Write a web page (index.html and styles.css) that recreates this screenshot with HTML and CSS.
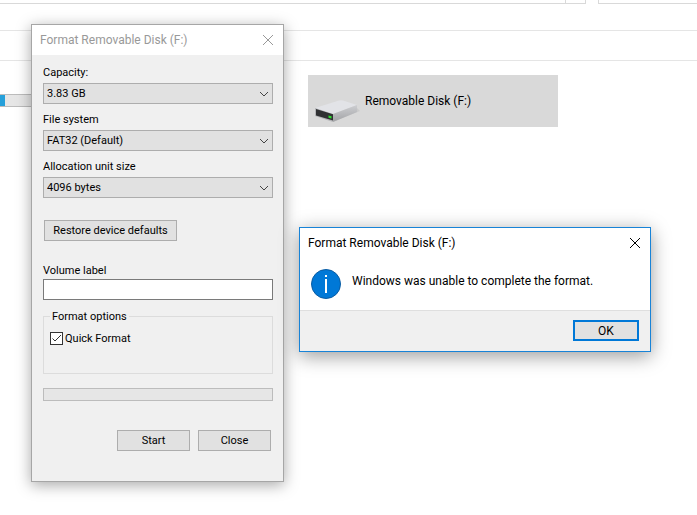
FILE: index.html
```
<!DOCTYPE html>
<html lang="en">
<head>
  <meta charset="UTF-8">
  <title>Format Removable Disk (F:)</title>
  <link rel="stylesheet" href="styles.css">
</head>
<body>
  <!-- Explorer window behind the dialogs -->
  <div class="explorer">
    <div class="address-row">
      <div class="address-bar"><span class="refresh"></span></div>
      <div class="search-bar"></div>
    </div>
    <div class="toolbar"></div>
    <div class="toolbar"></div>
    <div class="drives">
      <div class="drive-usage"><div class="drive-used"></div></div>
      <div class="drive-tile">
        <svg class="drive-icon" width="46" height="26" viewBox="0 0 46 26">
          <defs>
            <linearGradient id="side" x1="0" y1="0" x2="0" y2="1">
              <stop offset="0" stop-color="#cdced1"/>
              <stop offset="1" stop-color="#a2a3a6"/>
            </linearGradient>
          </defs>
          <path d="M18 25 L45 14 L42 11 Z" fill="#cbcbcb"/>
          <path d="M0 11 L24 3.500 Q26 3 28 3.500 L42 8 L18 17 Z" fill="#e2e3e7"/>
          <path d="M18 17 L42 8 V15 L18 25 Z" fill="url(#side)"/>
          <path d="M0 11 L18 17 V25 L0 19 Z" fill="#b4b5b8"/>
          <path d="M1 12 L18 17.300 V23.500 L1 18.500 Z" fill="#303133"/>
          <path d="M13.500 18.500 L16.500 19.300 V21.500 L13.500 20.800 Z" fill="#2fe02f"/>
        </svg>
        <span>Removable Disk (F:)</span>
      </div>
    </div>
  </div>

  <form class="window format-window" onsubmit="return false">
    <div class="title-bar">
      <span>Format Removable Disk (F:)</span>
      <button type="button" class="close" aria-label="Close window">
        <svg width="12" height="12" viewBox="0 0 12 12"><path d="M1 1 L11 11 M11 1 L1 11"/></svg>
      </button>
    </div>
    <div class="format-body">
      <label for="capacity">Capacity:</label>
      <div class="combo">
        <select id="capacity"><option>3.83 GB</option></select>
        <svg width="10" height="6" viewBox="0 0 10 6"><path d="M1 1 L5 5 L9 1"/></svg>
      </div>
      <label for="filesystem">File system</label>
      <div class="combo">
        <select id="filesystem"><option>FAT32 (Default)</option></select>
        <svg width="10" height="6" viewBox="0 0 10 6"><path d="M1 1 L5 5 L9 1"/></svg>
      </div>
      <label for="unit">Allocation unit size</label>
      <div class="combo">
        <select id="unit"><option>4096 bytes</option></select>
        <svg width="10" height="6" viewBox="0 0 10 6"><path d="M1 1 L5 5 L9 1"/></svg>
      </div>

      <button type="button" class="btn restore">Restore device defaults</button>

      <label for="volume">Volume label</label>
      <input type="text" id="volume" class="volume">

      <fieldset>
        <legend>Format options</legend>
        <div class="check-row">
          <div class="check">
            <input type="checkbox" id="quick" checked>
            <svg width="13" height="13" viewBox="0 0 13 13"><path d="M2.500 6.500 L5 9 L11 3"/></svg>
          </div>
          <label for="quick">Quick Format</label>
        </div>
      </fieldset>

      <div class="progress" role="progressbar" aria-label="Format progress"></div>

      <div class="actions">
        <button type="submit" class="btn">Start</button>
        <button type="button" class="btn">Close</button>
      </div>
    </div>
  </form>

  <div class="window message-window" role="alertdialog">
    <div class="title-bar">
      <span>Format Removable Disk (F:)</span>
      <button type="button" class="close" aria-label="Close message">
        <svg width="12" height="12" viewBox="0 0 12 12"><path d="M1 1 L11 11 M11 1 L1 11"/></svg>
      </button>
    </div>
    <div class="message-body">
      <svg width="30" height="30" viewBox="0 0 30 30">
        <circle cx="15" cy="15" r="14.500" fill="#0078d7" stroke="#0a5ca3"/>
        <path d="M14 6 H16 V8 H14 Z M14 10 H16 V24 H14 Z" fill="#fff"/>
      </svg>
      <p>Windows was unable to complete the format.</p>
    </div>
    <div class="message-footer">
      <button type="button" class="btn ok">OK</button>
    </div>
  </div>
</body>
</html>
```
FILE: styles.css
```
* {
  box-sizing: border-box;
  margin: 0;
  padding: 0;
}

body {
  position: relative;
  min-height: 100vh;
  overflow: hidden;
  background: #fff;
  color: #000;
  font-family: Roboto, "Segoe UI", sans-serif;
  font-size: 12px;
  line-height: 16px;
}

button,
input,
select {
  font: inherit;
  color: inherit;
}

/* Explorer */
.address-row {
  display: flex;
  gap: 12px;
  height: 4px;
}

.address-bar {
  display: flex;
  justify-content: flex-end;
  flex: 1;
  border: 1px solid #d9d9d9;
  border-width: 0 1px 1px 0;
}

.refresh {
  width: 20px;
  border-left: 1px solid #d9d9d9;
}

.search-bar {
  width: 99px;
  border: 1px solid #d9d9d9;
  border-width: 0 0 1px 1px;
}

.toolbar {
  height: 30px;
  border-bottom: 1px solid #e5e5e5;
}

.toolbar:nth-child(2) {
  height: 27px;
}

.drives {
  display: flex;
  align-items: flex-start;
  gap: 168px;
  padding-top: 14px;
}

.drive-usage {
  width: 140px;
  height: 13px;
  margin-top: 19px;
  border: 1px solid #bcbcbc;
  border-left: none;
  background: #e6e6e6;
}

.drive-used {
  width: 5px;
  height: 100%;
  background: #26a0da;
}

.drive-tile {
  display: flex;
  align-items: center;
  gap: 4px;
  width: 250px;
  height: 52px;
  padding-left: 7px;
  background: #d9d9d9;
}

.drive-icon {
  margin-top: 18px;
}

/* Windows */
.window {
  position: absolute;
}

.title-bar {
  display: flex;
  justify-content: space-between;
  align-items: center;
  height: 30px;
  padding: 0 9px 0 8px;
  background: #fff;
}

.close {
  width: 12px;
  height: 12px;
  border: none;
  background: none;
}

.close svg {
  display: block;
  fill: none;
  stroke: currentColor;
}

.btn {
  width: 73px;
  height: 21px;
  border: 1px solid #adadad;
  background: #e1e1e1;
}

.format-window {
  left: 31px;
  top: 24px;
  width: 253px;
  border: 1px solid #a6a6a6;
  background: #f0f0f0;
  box-shadow: 0 3px 14px rgba(0, 0, 0, 0.35);
}

.format-window .title-bar {
  color: #999;
}

.format-body {
  display: flex;
  flex-direction: column;
  padding: 10px 10px 30px 11px;
  font-size: 11px;
  line-height: 15px;
}

.combo {
  position: relative;
  margin: 3px 0 8px;
}

.combo select {
  display: block;
  width: 100%;
  height: 21px;
  padding-left: 3px;
  border: 1px solid #adadad;
  border-radius: 0;
  background: #e1e1e1;
  appearance: none;
}

.combo svg {
  position: absolute;
  right: 4px;
  top: 8px;
  fill: none;
  stroke: #444;
  pointer-events: none;
}

.restore {
  width: 133px;
  margin: 14px 0 22px 1px;
}

.volume {
  height: 21px;
  margin-top: 1px;
  padding: 0 4px;
  border: 1px solid #7a7a7a;
  background: #fff;
}

fieldset {
  height: 65px;
  margin-top: 9px;
  padding: 0 6px;
  border: 1px solid #dcdcdc;
}

legend {
  padding: 0 2px;
}

.check-row {
  display: flex;
  align-items: center;
  gap: 2px;
  margin-top: 7px;
}

.check {
  position: relative;
  width: 13px;
  height: 13px;
}

.check input {
  display: block;
  width: 13px;
  height: 13px;
  border: 1px solid #333;
  background: #fff;
  appearance: none;
}

.check svg {
  position: absolute;
  inset: 0;
  fill: none;
  stroke: #333;
  pointer-events: none;
}

.check input:not(:checked) + svg {
  display: none;
}

.progress {
  height: 13px;
  margin-top: 14px;
  border: 1px solid #bcbcbc;
  background: #e6e6e6;
}

.actions {
  display: flex;
  justify-content: flex-end;
  gap: 8px;
  margin-top: 29px;
  padding-right: 2px;
}

.message-window {
  left: 299px;
  top: 227px;
  width: 352px;
  border: 1px solid #1883d7;
  background: #fff;
  box-shadow: 0 4px 18px rgba(0, 0, 0, 0.4);
}

.message-body {
  display: flex;
  align-items: flex-start;
  gap: 11px;
  height: 52px;
  padding: 11px 11px 0;
}

.message-body p {
  margin-top: 4px;
}

.message-footer {
  display: flex;
  justify-content: flex-end;
  padding: 9px 11px 10px;
  border-top: 1px solid #dfdfdf;
  background: #f0f0f0;
}

.ok {
  width: 66px;
  border: 2px solid #0078d7;
}
```
